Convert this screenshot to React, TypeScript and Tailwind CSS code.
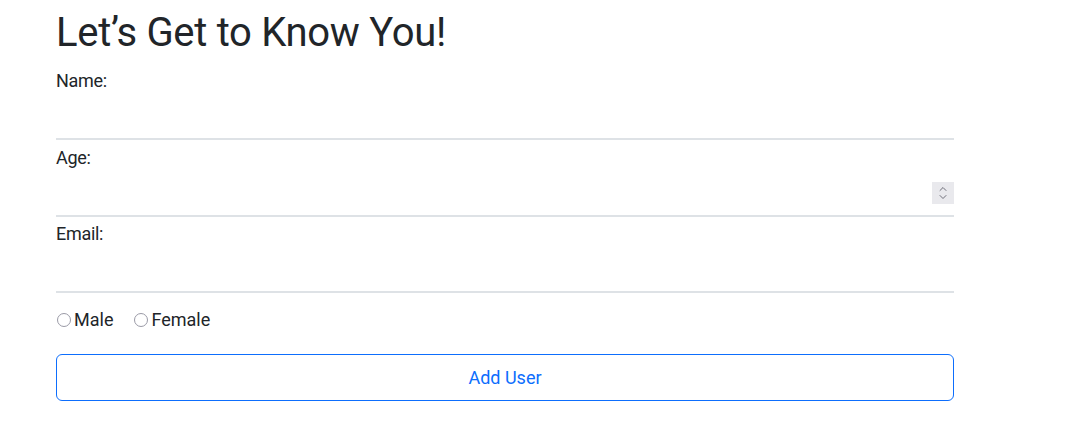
import { ChevronDown, ChevronUp } from "lucide-react";

export default function App() {
  return (
    <div className="w-[1068px] h-[430px] bg-white text-[#212529]" style={{ fontFamily: "Roboto, 'Liberation Sans', sans-serif" }}>
      <div className="ml-[56px] w-[898px] pt-[10px]">
        <h1 className="text-[40px] leading-[46px] font-normal tracking-[-0.3px]">Let’s Get to Know You!</h1>
        <div className="mt-[14px]">
          <Field label="Name:" />
        </div>
        <div className="mt-[7px]">
          <Field label="Age:" spinner />
        </div>
        <div className="mt-[6px]">
          <Field label="Email:" />
        </div>
        <div className="flex items-center gap-5 mt-[16px] text-[18px] leading-[22px]">
          <Radio label="Male" />
          <Radio label="Female" />
        </div>
        <button className="mt-[23px] w-full h-[47px] border border-[#0d6efd] rounded-[6px] text-[#0d6efd] text-[18px] bg-white">
          Add User
        </button>
      </div>
    </div>
  );
}

function Field({ label, spinner }: { label: string; spinner?: boolean }) {
  return (
    <div>
      <div className="text-[18px] leading-[22px] tracking-[-0.3px]">{label}</div>
      <div className="relative h-[48px] border-b-2 border-[#dee2e6]">
        {spinner && (
          <div className="absolute right-0 bottom-[11px] w-[22px] h-[22px] bg-[#e9e9ed] flex flex-col items-center justify-center text-[#6f6f7a]">
            <ChevronUp size={12} strokeWidth={2} className="-mb-[2px]" />
            <ChevronDown size={12} strokeWidth={2} className="-mt-[2px]" />
          </div>
        )}
      </div>
    </div>
  );
}

function Radio({ label }: { label: string }) {
  return (
    <label className="flex items-center">
      <span className="w-[14px] h-[14px] rounded-full border border-[#9a9aa6] mr-[3px] ml-[1px]" />
      {label}
    </label>
  );
}
